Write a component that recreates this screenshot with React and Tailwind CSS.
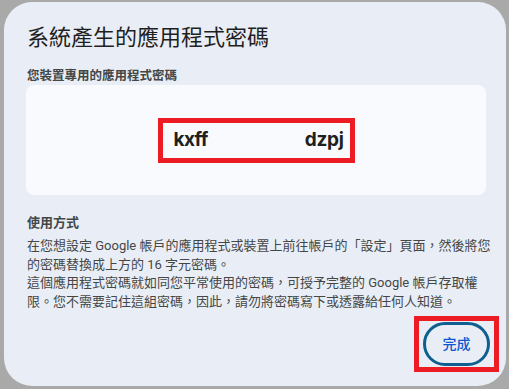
import React from "react";

const cjk = { fontFamily: '"Roboto", "Noto Sans CJK TC", sans-serif' };

const App = () => {
  return (
    <div
      className="w-[509px] h-[389px] bg-[#a9a9a9] pt-[2px] pl-[4px] overflow-hidden"
      style={cjk}
    >
      <div className="w-[502px] h-[384px] rounded-[28px] bg-[#e9eef6] px-[22px] pt-[22px] flex flex-col">
        <h1 className="text-[22px] leading-[28px] text-[#1f1f1f] pl-[1px]">
          系統產生的應用程式密碼
        </h1>
        <div className="mt-[15px] text-[12.5px] leading-[18px] font-bold text-[#444746] pl-[1px]">
          您裝置專用的應用程式密碼
        </div>
        <div className="w-[460px] h-[110px] rounded-[8px] bg-[#f8fafd] flex items-center justify-center">
          <div className="w-[197px] h-[45px] border-[5px] border-[#ed1c24] flex items-center justify-between pl-[11px] pr-[6px]">
            <span
              className="text-[19px] font-bold text-[#1f1f1f] tracking-[-0.6px]"
              style={{ fontFamily: '"Inter", sans-serif' }}
            >
              kxff
            </span>
            <span
              className="text-[19px] font-bold text-[#1f1f1f] tracking-[-0.3px]"
              style={{ fontFamily: '"Inter", sans-serif' }}
            >
              dzpj
            </span>
          </div>
        </div>
        <div className="mt-[19px] pl-[1px] text-[13px] leading-[18.4px] text-[#444746] whitespace-nowrap">
          <div className="font-bold">使用方式</div>
          <div className="mt-[5px]">
            在您想設定 Google 帳戶的應用程式或裝置上前往帳戶的「設定」頁面，然後將您
            <br />
            的密碼替換成上方的 16 字元密碼。
          </div>
          <div>
            這個應用程式密碼就如同您平常使用的密碼，可授予完整的 Google 帳戶存取權
            <br />
            限。您不需要記住這組密碼，因此，請勿將密碼寫下或透露給任何人知道。
          </div>
        </div>
        <div className="flex justify-end mt-[5px] -mr-[15px]">
          <div className="w-[85px] h-[56px] border-[5px] border-[#ed1c24] flex items-center justify-center">
            <button className="w-[67px] h-[44px] rounded-full border-[3px] border-[#0e5f8f] text-[14px] font-medium text-[#0b57d0]">
              完成
            </button>
          </div>
        </div>
      </div>
    </div>
  );
};

export default App;
